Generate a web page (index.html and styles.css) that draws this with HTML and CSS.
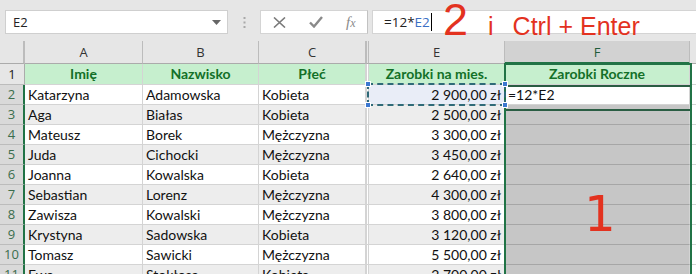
FILE: index.html
```html
<!DOCTYPE html>
<html lang="pl">
<head>
  <meta charset="UTF-8">
  <title>Zarobki</title>
  <link rel="stylesheet" href="styles.css">
</head>
<body>

  <div class="topbar">
    <div class="namebox">
      <span>E2</span>
      <svg class="drop" width="9" height="5" viewBox="0 0 9 5"><path d="M0 0h9L4.5 5z" fill="#666"/></svg>
    </div>
    <div class="grip">
      <svg width="3" height="11" viewBox="0 0 3 11"><rect x="0.5" y="0" width="2" height="2" fill="#a8a8a8"/><rect x="0.5" y="4.5" width="2" height="2" fill="#a8a8a8"/><rect x="0.5" y="9" width="2" height="2" fill="#a8a8a8"/></svg>
    </div>
    <div class="fbtns">
      <svg width="13" height="11" viewBox="0 0 13 11"><path d="M1 0.5l11 10M12 0.5l-11 10" stroke="#7a7a7a" stroke-width="1.6" fill="none"/></svg>
      <svg width="14" height="12" viewBox="0 0 14 12"><path d="M1 6.5l4 4L13 1" stroke="#8a8a8a" stroke-width="2.4" fill="none"/></svg>
      <span class="fx">f<i>x</i></span>
    </div>
    <div class="finput">=12*<span class="refname">E2</span><span class="caret"></span></div>

    <div class="note-top"><span class="big">2</span><span class="i">i</span><span>Ctrl + Enter</span></div>
  </div>

  <div class="sheet">
    <div class="row colhead">
      <div class="rh"></div>
      <div class="c">A</div><div class="c">B</div><div class="c">C</div><div class="c d"></div><div class="c">E</div><div class="c on">F</div><div class="c"></div>
    </div>

    <div class="row head">
      <div class="rh">1</div>
      <div class="c">Imię</div><div class="c">Nazwisko</div><div class="c">Płeć</div><div class="c d"></div><div class="c">Zarobki na mies.</div><div class="c">Zarobki Roczne</div><div class="c g"></div>
    </div>

    <div class="row">
      <div class="rh">2</div>
      <div class="c">Katarzyna</div><div class="c">Adamowska</div><div class="c">Kobieta</div><div class="c d"></div><div class="c num ref">2 900,00 zł</div><div class="c active">=12*E2</div><div class="c g"></div>
    </div>
    <div class="row alt">
      <div class="rh">3</div>
      <div class="c">Aga</div><div class="c">Białas</div><div class="c">Kobieta</div><div class="c d"></div><div class="c num">2 500,00 zł</div><div class="c sel"></div><div class="c g"></div>
    </div>
    <div class="row">
      <div class="rh">4</div>
      <div class="c">Mateusz</div><div class="c">Borek</div><div class="c">Mężczyzna</div><div class="c d"></div><div class="c num">3 300,00 zł</div><div class="c sel"></div><div class="c g"></div>
    </div>
    <div class="row alt">
      <div class="rh">5</div>
      <div class="c">Juda</div><div class="c">Cichocki</div><div class="c">Mężczyzna</div><div class="c d"></div><div class="c num">3 450,00 zł</div><div class="c sel"></div><div class="c g"></div>
    </div>
    <div class="row">
      <div class="rh">6</div>
      <div class="c">Joanna</div><div class="c">Kowalska</div><div class="c">Kobieta</div><div class="c d"></div><div class="c num">2 640,00 zł</div><div class="c sel"></div><div class="c g"></div>
    </div>
    <div class="row alt">
      <div class="rh">7</div>
      <div class="c">Sebastian</div><div class="c">Lorenz</div><div class="c">Mężczyzna</div><div class="c d"></div><div class="c num">4 300,00 zł</div><div class="c sel"></div><div class="c g"></div>
    </div>
    <div class="row">
      <div class="rh">8</div>
      <div class="c">Zawisza</div><div class="c">Kowalski</div><div class="c">Mężczyzna</div><div class="c d"></div><div class="c num">3 800,00 zł</div><div class="c sel"></div><div class="c g"></div>
    </div>
    <div class="row alt">
      <div class="rh">9</div>
      <div class="c">Krystyna</div><div class="c">Sadowska</div><div class="c">Kobieta</div><div class="c d"></div><div class="c num">3 120,00 zł</div><div class="c sel"></div><div class="c g"></div>
    </div>
    <div class="row">
      <div class="rh">10</div>
      <div class="c">Tomasz</div><div class="c">Sawicki</div><div class="c">Mężczyzna</div><div class="c d"></div><div class="c num">5 500,00 zł</div><div class="c sel"></div><div class="c g"></div>
    </div>
    <div class="row alt">
      <div class="rh">11</div>
      <div class="c">Ewa</div><div class="c">Stokłosa</div><div class="c">Kobieta</div><div class="c d"></div><div class="c num">2 700,00 zł</div><div class="c sel"></div><div class="c g"></div>
    </div>

    <!-- overlays: selection range, copied reference, annotation -->
    <div class="selbox"></div>
    <div class="refbox">
      <span class="h tl"></span><span class="h tr"></span><span class="h bl"></span><span class="h br"></span>
    </div>
    <div class="note-one">1</div>
  </div>

</body>
</html>
```

FILE: styles.css
```css
* {
  box-sizing: border-box;
}

body {
  margin: 0;
  width: 696px;
  height: 274px;
  overflow: hidden;
  background: #e6e6e6;
  font-family: Lato, "Open Sans", sans-serif;
  color: #111;
}

/* ---- top bar ---- */
.topbar {
  position: relative;
  display: flex;
  align-items: center;
  height: 41px;
  padding: 10px 0 7px 5px;
  background: #e6e6e6;
}

.namebox {
  display: flex;
  align-items: center;
  justify-content: space-between;
  width: 223px;
  height: 24px;
  padding: 0 6px 0 7px;
  background: white;
  border: 1px solid #cfcfcf;
  font-family: "Open Sans", sans-serif;
  font-size: 13px;
  color: #222;
}

.grip {
  display: flex;
  justify-content: center;
  width: 32px;
}

.fbtns {
  display: flex;
  align-items: center;
  gap: 23px;
  width: 108px;
  height: 24px;
  padding-left: 12px;
  background: white;
  border: 1px solid #d4d4d4;
  border-right-color: #c2c2c2;
}

.fx {
  font-family: "Liberation Serif", serif;
  font-style: italic;
  font-size: 15px;
  color: #8a8a8a;
}

.fx i {
  font-size: 12px;
}

.finput {
  display: flex;
  align-items: center;
  flex: 1;
  height: 24px;
  margin-left: 4px;
  padding-left: 11px;
  background: white;
  border: 1px solid #d4d4d4;
  border-right: none;
  font-family: "Open Sans", sans-serif;
  font-size: 13.5px;
  color: #222;
}

.refname {
  color: #3b6fc4;
}

.caret {
  width: 1px;
  height: 18px;
  margin-left: 1px;
  background: #000;
}

.note-top {
  position: absolute;
  left: 443px;
  top: 2px;
  display: flex;
  align-items: baseline;
  line-height: 0.8;
  font-family: "Liberation Sans", Arial, sans-serif;
  font-size: 25px;
  color: #e3321f;
}

.note-top .big {
  font-size: 45px;
  margin-right: 20px;
}

.note-top .i {
  margin-right: 19px;
}

/* ---- sheet ---- */
.sheet {
  position: relative;
  background: white;
}

.row {
  display: grid;
  grid-template-columns: 25px 118px 116px 107px 3px 136px 185px 1fr;
  height: 20px;
}

.c,
.rh {
  height: 100%;
  padding: 0 3px;
  line-height: 19px;
  white-space: nowrap;
  overflow: hidden;
  border-right: 1px solid #d4d4d4;
  border-bottom: 1px solid #d4d4d4;
  font-size: 14px;
}

.c.d {
  padding: 0;
  border-left: 1px solid #d4d4d4;
  background: white;
}

.rh {
  padding: 0;
  text-align: center;
  background: #d9d9d9;
  color: #3b6e4d;
  border-right: 2px solid #217346;
  border-bottom-color: #bcbcbc;
  font-family: "Open Sans", sans-serif;
  font-size: 13px;
}

.row.alt .c {
  background: #ededed;
}

.num {
  text-align: right;
  padding-right: 3px;
}

/* column letters */
.colhead {
  height: 23px;
  background: #e6e6e6;
}

.colhead .c,
.colhead .rh {
  line-height: 22px;
  text-align: center;
  background: #e6e6e6;
  color: #333;
  border-right-color: #bcbcbc;
  border-bottom: 1px solid #ababab;
  font-family: "Open Sans", sans-serif;
  font-size: 13px;
}

.colhead .c.d {
  border-left-color: #bcbcbc;
}

.colhead .c.on {
  background: #d2d2d2;
  color: #1f5c3a;
  border-bottom: 2px solid #217346;
}

/* header row */
.head {
  height: 21px;
}

.head .rh {
  background: #e6e6e6;
  color: #222;
  border-right: 1px solid #ababab;
  line-height: 20px;
}

.head .c {
  line-height: 20px;
  text-align: center;
  font-weight: bold;
  color: #137028;
  background: #c6efce;
  border-color: #d4d4d4;
}

.head .c.d,
.head .c.g {
  background: white;
}

.row.alt .c.d,
.row .c.g,
.row.alt .c.g {
  background: white;
}

.ref {
  background: #e9edf7 !important;
}

.c.active {
  background: white;
}

.c.sel,
.row.alt .c.sel {
  background: #c6c6c6;
  border-bottom-color: #a6a6a6;
}

.selbox {
  position: absolute;
  left: 504px;
  top: 22px;
  width: 188px;
  height: 260px;
  border: 2px solid #217346;
  pointer-events: none;
}

.selbox::after {
  content: "";
  position: absolute;
  left: 0;
  right: 0;
  top: 20px;
  height: 22px;
  border-top: 2px solid #2a5d43;
  border-bottom: 2px solid #2a5d43;
}

.refbox {
  position: absolute;
  left: 367px;
  top: 42px;
  width: 139px;
  height: 23px;
  border: 2px dashed #2f6a78;
}

.refbox .h {
  position: absolute;
  width: 6px;
  height: 6px;
  background: #3c78d0;
  border: 1px solid white;
}

.refbox .tl { left: -4px; top: -4px; }
.refbox .tr { right: -4px; top: -4px; }
.refbox .bl { left: -4px; bottom: -4px; }
.refbox .br { right: -4px; bottom: -4px; }

.note-one {
  position: absolute;
  left: 584px;
  top: 148px;
  font-family: "DejaVu Sans", sans-serif;
  font-size: 50px;
  line-height: 1;
  color: #e3321f;
}
```
